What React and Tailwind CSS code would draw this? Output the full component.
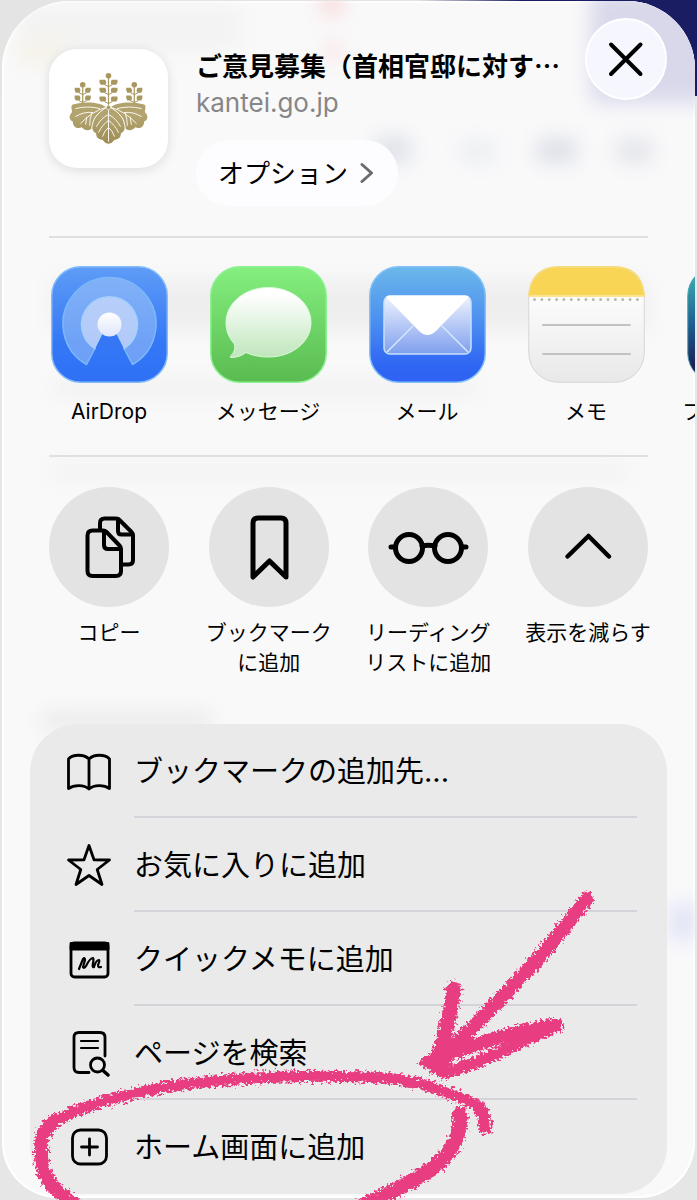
import React from 'react';

const sheetFont = "font-['Inter','Noto_Sans_CJK_JP',sans-serif]";
const titleFont = "font-['Noto_Sans_CJK_JP',sans-serif]";

// ---------- site emblem ----------
const Sprig = ({ x, top, pairs, w }) => (
  <g>
    <path d={`M${x} ${top} V57`} stroke="#a8975f" strokeWidth="1.2" />
    <circle cx={x} cy={top} r="2.800" fill="#a8975f" />
    {pairs.map((y) => (
      <g key={y} fill="#a8975f">
        <path d={`M${x - w} ${y - 3} H${x - 3.5} Q${x - 1.5} ${y - 1} ${x - 3} ${y + 2} H${x - w + 1} Q${x - w - 1} ${y} ${x - w} ${y - 3} Z`} />
        <path d={`M${x + w} ${y - 3} H${x + 3.5} Q${x + 1.5} ${y - 1} ${x + 3} ${y + 2} H${x + w - 1} Q${x + w + 1} ${y} ${x + w} ${y - 3} Z`} />
        <path d={`M${x - 4} ${y + 2} L${x} ${y + 4} L${x + 4} ${y + 2}`} fill="none" stroke="#a8975f" strokeWidth="1" />
      </g>
    ))}
  </g>
);

const sideLeaf = 'M57 57 C50 51 34 51 23 54 C20 56 23 60 22 62 C18 66 20 70 23 71 C23 77 28 79 32 77 C36 82 42 80 44 76 C45 68 50 62 57 57 Z';

const Emblem = () => (
  <svg viewBox="-1 -2 120 120" className="size-full" aria-hidden="true">
    <defs>
      <linearGradient id="gold" x1="0" y1="20" x2="0" y2="96" gradientUnits="userSpaceOnUse">
        <stop offset="0" stopColor="#ad9c64" />
        <stop offset="0.6" stopColor="#b3a470" />
        <stop offset="1" stopColor="#9c8a50" />
      </linearGradient>
    </defs>
    <Sprig x={33} top={34} pairs={[40, 48]} w={8} />
    <Sprig x={59} top={25} pairs={[32, 40, 49]} w={9} />
    <Sprig x={85} top={34} pairs={[40, 48]} w={8} />
    {['', 'translate(118 0) scale(-1 1)'].map((t) => (
      <g key={t} transform={t}>
        <path d={sideLeaf} fill="url(#gold)" />
        <g fill="none" stroke="#fff" strokeWidth="0.9" strokeLinecap="round">
          <path d="M56 57 Q42 61 31 73" />
          <path d="M50 58 Q38 55 26 58" />
          <path d="M43 62 Q34 61 26 66" />
          <path d="M42 63 Q40 69 40 75" />
          <path d="M37 67 L36 74" />
        </g>
      </g>
    ))}
    <path
      d="M59 56 C52 59 43 67 43 74 C41 78 43 82 46 83 C46 88 50 90 53 90 C55 93 57 94 59 94 C61 94 63 93 65 90 C68 90 72 88 72 83 C75 82 77 78 75 74 C75 67 66 59 59 56 Z"
      fill="url(#gold)"
      stroke="#fff"
      strokeWidth="1"
    />
    <g fill="none" stroke="#fff" strokeWidth="0.9" strokeLinecap="round">
      <path d="M59 60 V91" />
      <path d="M59 64 Q51 68 47 76 M59 64 Q67 68 71 76" />
      <path d="M59 70 Q53 74 49 82 M59 70 Q65 74 69 82" />
      <path d="M59 77 Q55 80 53 86 M59 77 Q63 80 65 86" />
    </g>
    <circle cx="59" cy="57" r="2.200" fill="#a8975f" stroke="#fff" strokeWidth="0.6" />
  </svg>
);

// ---------- app icons (117 x 117) ----------
const AirDropIcon = () => (
  <svg viewBox="0 0 117 117" className="size-full" aria-hidden="true">
    <defs>
      <linearGradient id="adBg" x1="0" y1="0" x2="0" y2="1">
        <stop offset="0" stopColor="#5f9cf6" />
        <stop offset="0.65" stopColor="#3478f6" />
        <stop offset="1" stopColor="#2f70f5" />
      </linearGradient>
      <linearGradient id="adDot" x1="0" y1="0" x2="0" y2="1">
        <stop offset="0" stopColor="#fff" />
        <stop offset="1" stopColor="#dfe6fb" />
      </linearGradient>
    </defs>
    <rect x="0.75" y="0.75" width="115.5" height="115.5" rx="29" fill="url(#adBg)" stroke="#83bcfb" strokeWidth="1.5" />
    <path d="M35.500 98.500 A46.500 46.500 0 1 1 81.500 98.500 L66 69 H51 Z" fill="#a9cbf8" fillOpacity="0.5" stroke="#7db9fa" strokeWidth="1.500" strokeLinejoin="round" />
    <path d="M43.800 82.500 A28 28 0 1 1 73.200 82.500 L66 69 H51 Z" fill="#d7e0fa" fillOpacity="0.650" stroke="#a6d0fc" strokeWidth="1.500" />
    <path d="M51.500 68 H65.500 L72.500 82 H44.500 Z" fill="#3576f5" />
    <circle cx="58.500" cy="58.500" r="12" fill="url(#adDot)" />
  </svg>
);

const MessagesIcon = () => (
  <svg viewBox="0 0 117 117" className="size-full" aria-hidden="true">
    <defs>
      <linearGradient id="msBg" x1="0" y1="0" x2="0" y2="1">
        <stop offset="0" stopColor="#84ef7f" />
        <stop offset="1" stopColor="#5abb50" />
      </linearGradient>
      <linearGradient id="msBubble" x1="0" y1="0" x2="0" y2="1">
        <stop offset="0.1" stopColor="#fff" />
        <stop offset="1" stopColor="#bfe6bb" />
      </linearGradient>
    </defs>
    <rect x="0.75" y="0.75" width="115.5" height="115.5" rx="29" fill="url(#msBg)" stroke="#8cf291" strokeWidth="1.5" />
    <path
      d="M58.500 21.500 C82 21.500 101 37 101 56.500 C101 76 82 91 58.500 91 C51 91 42 89.500 36 86.500 C32 89.500 27 91.500 21 91.500 C20 91.500 20 90.800 20.500 90 C24 87 25.500 83 24.500 78 C19 72 16 65 16 56.500 C16 37 35 21.500 58.500 21.500 Z"
      fill="url(#msBubble)"
      stroke="#dcfadb"
      strokeWidth="1"
    />
  </svg>
);

const MailIcon = () => (
  <svg viewBox="0 0 117 117" className="size-full" aria-hidden="true">
    <defs>
      <linearGradient id="mlBg" x1="0" y1="0" x2="0" y2="1">
        <stop offset="0" stopColor="#6cb8ea" />
        <stop offset="0.5" stopColor="#4a8cf0" />
        <stop offset="0.85" stopColor="#2f66f3" />
        <stop offset="1" stopColor="#2f62f3" />
      </linearGradient>
      <linearGradient id="mlBody" x1="0" y1="0" x2="0" y2="1">
        <stop offset="0" stopColor="#eef3fd" />
        <stop offset="1" stopColor="#7f9fee" />
      </linearGradient>
    </defs>
    <rect x="0.75" y="0.75" width="115.5" height="115.5" rx="29" fill="url(#mlBg)" stroke="#83c1f8" strokeWidth="1.5" />
    <rect x="15" y="30" width="87" height="58" rx="6" fill="url(#mlBody)" stroke="#c8e0fd" strokeWidth="1.5" />
    <path d="M18 86 L44 60 M99 86 L73 60" stroke="#d5e8fe" strokeWidth="1.500" />
    <path d="M17 31 Q18 29 22 29.500 H95 Q99 29 100 31 L67 65 Q58.500 73 50 65 Z" fill="#fff" />
  </svg>
);

const NotesIcon = () => (
  <svg viewBox="0 0 117 117" className="size-full" aria-hidden="true">
    <defs>
      <linearGradient id="ntBg" x1="0" y1="0" x2="0" y2="1">
        <stop offset="0.3" stopColor="#fbfbfc" />
        <stop offset="1" stopColor="#e8e8e8" />
      </linearGradient>
      <clipPath id="ntClip">
        <rect x="0.5" y="0.5" width="116" height="116" rx="30" />
      </clipPath>
    </defs>
    <g clipPath="url(#ntClip)">
      <rect width="117" height="117" fill="url(#ntBg)" />
      <rect width="117" height="30" fill="#f9d556" />
      <rect y="29" width="117" height="2" fill="#fbe48f" />
    </g>
    <rect x="0.75" y="0.75" width="115.5" height="115.5" rx="29.500" fill="none" stroke="#d6d6d6" strokeWidth="1" />
    <path d="M1 30 V28 Q4 1 30 1 H87 Q113 1 116 28 V30" fill="none" stroke="#fadc72" strokeWidth="1.500" />
    <path d="M6.500 33.500 H112" stroke="#bdb9ab" strokeWidth="3" strokeLinecap="round" strokeDasharray="0 7.350" />
    <path d="M15 59 H102 M15 88 H102" stroke="#c2c2c2" strokeWidth="2" strokeLinecap="round" />
  </svg>
);

const BoardIcon = () => (
  <svg viewBox="0 0 117 117" className="size-full" aria-hidden="true">
    <defs>
      <linearGradient id="bdBg" x1="0" y1="0" x2="0" y2="1">
        <stop offset="0" stopColor="#42b8b6" />
        <stop offset="0.5" stopColor="#1d5e91" />
        <stop offset="0.9" stopColor="#1d1b4e" />
      </linearGradient>
    </defs>
    <rect x="0.75" y="0.75" width="115.5" height="115.5" rx="29" fill="url(#bdBg)" stroke="#4aa3b5" strokeWidth="1" />
  </svg>
);

const apps = [
  { name: 'AirDrop', icon: <AirDropIcon /> },
  { name: 'メッセージ', icon: <MessagesIcon /> },
  { name: 'メール', icon: <MailIcon /> },
  { name: 'メモ', icon: <NotesIcon /> },
  { name: 'フリーボード', icon: <BoardIcon /> },
];

// ---------- round action buttons ----------
const actions = [
  {
    lines: ['コピー'],
    drawing: (
      <g strokeWidth="4">
        <path d="M51 43 V36 Q51 31.500 55.500 31.500 H67 Q69 31.500 70.500 33 L82.500 45 Q84 46.500 84 48.500 V73 Q84 77.500 79.500 77.500 H73" />
        <path d="M69 32 V44 Q69 47.500 72.500 47.500 H83" />
        <path d="M43.500 43.500 H54 Q56 43.500 57.500 45 L70.500 58.500 Q72 60 72 62 V84 Q72 89 67 89 H43.500 Q38.500 89 38.500 84 V48.500 Q38.500 43.500 43.500 43.500 Z" />
        <path d="M55 44 V58 Q55 62 59 62 H71" />
      </g>
    ),
  },
  {
    lines: ['ブックマーク', 'に追加'],
    drawing: <path strokeWidth="5" d="M44 90 V36 Q44 31 49 31 H72 Q77 31 77 36 V90 L60.500 74 Z" />,
  },
  {
    lines: ['リーディング', 'リストに追加'],
    drawing: (
      <g strokeWidth="5">
        <circle cx="41" cy="61" r="13.500" />
        <circle cx="80" cy="61" r="13.500" />
        <path d="M54 59 Q60.500 57.500 67 59" />
        <path d="M23 60 H27 M94 60 H98" />
      </g>
    ),
  },
  {
    lines: ['表示を減らす'],
    drawing: <path strokeWidth="4.500" d="M39.500 69.500 L60.500 49 L81 69.500" />,
  },
];

// ---------- list rows ----------
const rows = [
  {
    label: 'ブックマークの追加先...',
    drawing: (
      <path d="M24 42 V12 C19 7 8 7 3.500 12 V41.500 C9 37.500 19 37.500 24 42 C29 37.500 39 37.500 44.500 41.500 V12 C40 7 29 7 24 12" />
    ),
  },
  {
    label: 'お気に入りに追加',
    drawing: <path d="M24 4.500 L29 18.800 L44.500 19 L32.200 28.500 L37 43.500 L24 34.500 L11 43.500 L15.800 28.500 L3.500 19 L19 18.800 Z" />,
  },
  {
    label: 'クイックメモに追加',
    drawing: (
      <>
        <rect x="6" y="8" width="37" height="34" rx="3.500" />
        <path d="M6 8.500 H43 V14 H6 Z" fill="#000" />
        <path strokeWidth="2.200" d="M14 34 L18 24 Q20 22 20 25 L18 32 Q19 34 21 31 Q25 23 28 23 Q29 24 28 28 Q27 33 29 32 Q31 25 34 25 Q35 26 33 30 Q33 33 36 32" />
      </>
    ),
  },
  {
    label: 'ページを検索',
    drawing: (
      <>
        <path d="M24 43.500 H14 Q9 43.500 9 38.500 V8.500 Q9 3.500 14 3.500 H35 Q40 3.500 40 8.500 V27" />
        <path strokeWidth="2.200" d="M16 12 H33 M16 19 H33" />
        <circle cx="32.500" cy="36" r="7" />
        <path strokeWidth="3.400" d="M38 41.500 L43 46" />
      </>
    ),
  },
  {
    label: 'ホーム画面に追加',
    drawing: (
      <>
        <rect x="7.500" y="7" width="34" height="34" rx="8" />
        <path d="M24.500 16 V32 M16.500 24 H32.500" />
      </>
    ),
  },
];

// page content that shines through the glass sheet
const Backdrop = () => (
  <svg viewBox="0 0 697 1200" preserveAspectRatio="none" className="absolute inset-0 size-full" aria-hidden="true">
    <defs>
      <filter id="soft" x="-50%" y="-50%" width="200%" height="200%">
        <feGaussianBlur stdDeviation="10" />
      </filter>
    </defs>
    <g filter="url(#soft)">
      <rect x="20" y="5" width="220" height="45" fill="#f3f3f3" />
      <rect x="15" y="35" width="50" height="30" fill="#f5f3ea" />
      <circle cx="332" cy="2" r="12" fill="#f9d4d4" />
      <circle cx="334" cy="50" r="10" fill="#fbe2e2" />
      <rect x="592" y="-10" width="130" height="112" rx="10" fill="#d8d8ea" />
      <rect x="375" y="136" width="36" height="26" fill="#dfe1e8" />
      <rect x="460" y="140" width="36" height="22" fill="#eceef2" />
      <rect x="538" y="138" width="40" height="24" fill="#dddfe7" />
      <rect x="618" y="138" width="36" height="24" fill="#e3e4ea" />
      <rect x="50" y="280" width="600" height="50" fill="#eeeeee" />
      <rect x="50" y="380" width="430" height="16" fill="#f1f1f1" />
      <rect x="50" y="466" width="580" height="12" fill="#f0f0f0" />
      <rect x="40" y="714" width="170" height="14" fill="#e6e6e6" />
      <rect x="672" y="905" width="26" height="36" fill="#dfe2f5" />
    </g>
  </svg>
);

// hand drawn arrow and circle around the last row
const Scribble = () => (
  <svg viewBox="0 880 697 320" className="pointer-events-none absolute inset-x-0 bottom-0 w-full" aria-hidden="true">
    <defs>
      <filter id="crayon" x="0" y="880" width="697" height="330" filterUnits="userSpaceOnUse">
        <feTurbulence type="fractalNoise" baseFrequency="0.35" numOctaves="3" seed="4" result="n" />
        <feDisplacementMap in="SourceGraphic" in2="n" scale="11" xChannelSelector="R" yChannelSelector="G" />
      </filter>
    </defs>
    <g filter="url(#crayon)" fill="none" stroke="#e83e80" strokeLinecap="round" strokeLinejoin="round">
      <path strokeWidth="14" d="M76 1206 C58 1192 40 1180 41 1153 C41 1138 42 1130 56 1120" />
      <path strokeWidth="11" d="M50 1124 C75 1108 120 1095 167 1087 C230 1077 320 1074 385 1078 C425 1081 455 1095 478 1106" />
      <path strokeWidth="13" d="M478 1106 Q486 1116 485 1128" />
      <path strokeWidth="15" d="M460 1114 C461 1145 445 1163 414 1180 Q393 1192 362 1206" />
      <path strokeWidth="14" d="M587 899 C565 925 550 947 528 970 C505 993 480 1022 455 1044" />
      <path strokeWidth="15" d="M454 989 C450 1015 446 1035 438 1056" />
      <path strokeWidth="14" d="M556 1025 C520 1030 470 1045 428 1062" />
      <path strokeWidth="12" d="M556 1026 C520 1042 480 1064 444 1073 L426 1062" />
      <path fill="#e83e80" strokeWidth="3" d="M420 1063 L446 1042 L452 1056 L444 1074 Z" />
    </g>
  </svg>
);

const App = () => {
  return (
    <div
      lang="ja"
      className={`relative flex min-h-screen flex-col overflow-hidden bg-[linear-gradient(to_right,#e4e4e4_60%,#1b1d62_75%)] text-black ${sheetFont}`}
    >
      <div className="absolute inset-x-0 top-24 bottom-0 bg-[#e6e6e6]" />

      <main className="relative mx-[2px] mt-px mb-[2px] flex grow flex-col overflow-hidden rounded-t-[68px] rounded-b-[56px] bg-[#f9f9fa] shadow-[inset_0_0_0_2px_#ffffff]">
        <Backdrop />

        <header className="relative flex items-start pt-12 pr-7 pl-[47px]">
          <div className="size-[119px] shrink-0 rounded-[28px] bg-white shadow-[0_2px_12px_rgba(0,0,0,0.12)]">
            <Emblem />
          </div>
          <div className="ml-7 min-w-0 grow">
            <h1 className={`text-[26px] leading-8 font-bold whitespace-nowrap ${titleFont}`}>
              ご意見募集（首相官邸に対す…
            </h1>
            <p className="mt-1 text-[26px] leading-9 text-[#868688]">kantei.go.jp</p>
            <button className="mt-[19px] flex h-[66px] items-center gap-3 rounded-full bg-[#fdfdff] pr-6 pl-[22px] text-[26px]">
              オプション
              <svg viewBox="0 0 14 22" className="h-[22px] w-[14px]" fill="none" stroke="#6b6b6d" strokeWidth="3" strokeLinecap="round" strokeLinejoin="round" aria-hidden="true">
                <path d="M2 2.500 L11.500 11 L2 19.500" />
              </svg>
            </button>
          </div>
          <button aria-label="閉じる" className="absolute top-[17px] right-7 size-[82px] rounded-full border-2 border-white bg-[#f5f6fe]">
            <svg viewBox="0 0 78 78" fill="none" stroke="#000" strokeWidth="4" strokeLinecap="round" aria-hidden="true">
              <path d="M24 24.500 L53.500 54 M53.500 24.500 L24 54" />
            </svg>
          </button>
        </header>

        <hr className="relative mx-[47px] mt-[30px] border-t-2 border-[#e0e0e3]" />

        {/* share targets, scrolls sideways */}
        <section className="relative mt-7 flex gap-[39px] overflow-hidden pl-[47px]">
          {apps.map((app) => (
            <button key={app.name} className="flex w-[120px] shrink-0 flex-col items-center">
              <span className="block size-[117px]">{app.icon}</span>
              <span className="mt-[14px] text-[21px] leading-[30px] whitespace-nowrap">{app.name}</span>
            </button>
          ))}
        </section>

        <hr className="relative mx-[47px] mt-7 border-t-2 border-[#e0e0e3]" />

        <section className="relative mx-[47px] mt-[30px] flex justify-between">
          {actions.map((action) => (
            <button key={action.lines[0]} className="flex w-[120px] flex-col items-center">
              <span className="block size-[120px] rounded-full bg-[#e3e3e3]">
                <svg viewBox="0 0 120 120" fill="none" stroke="#000" strokeLinecap="round" strokeLinejoin="round" aria-hidden="true">
                  {action.drawing}
                </svg>
              </span>
              <span className="mt-[11px] text-[21px] leading-[30px] whitespace-nowrap">
                {action.lines.map((line) => (
                  <span key={line} className="block">{line}</span>
                ))}
              </span>
            </button>
          ))}
        </section>

        <ul className="relative mx-7 mt-[46px] rounded-[48px] bg-[#eaeaea]">
          {rows.map((row, index) => (
            <li key={row.label}>
              <button className="flex h-[94px] w-full items-center pr-[30px] pl-[35px] text-left">
                <svg viewBox="0 0 48 48" className="size-12 shrink-0" fill="none" stroke="#000" strokeWidth="2.800" strokeLinecap="round" strokeLinejoin="round" aria-hidden="true">
                  {row.drawing}
                </svg>
                <span
                  className={`ml-[21px] flex h-full grow items-center border-b-2 pt-1 text-[29px] ${
                    index < rows.length - 1 ? 'border-[#d3d3d9]' : 'border-transparent'
                  }`}
                >
                  {row.label}
                </span>
              </button>
            </li>
          ))}
        </ul>
      </main>

      <Scribble />
    </div>
  );
};

export default App;
